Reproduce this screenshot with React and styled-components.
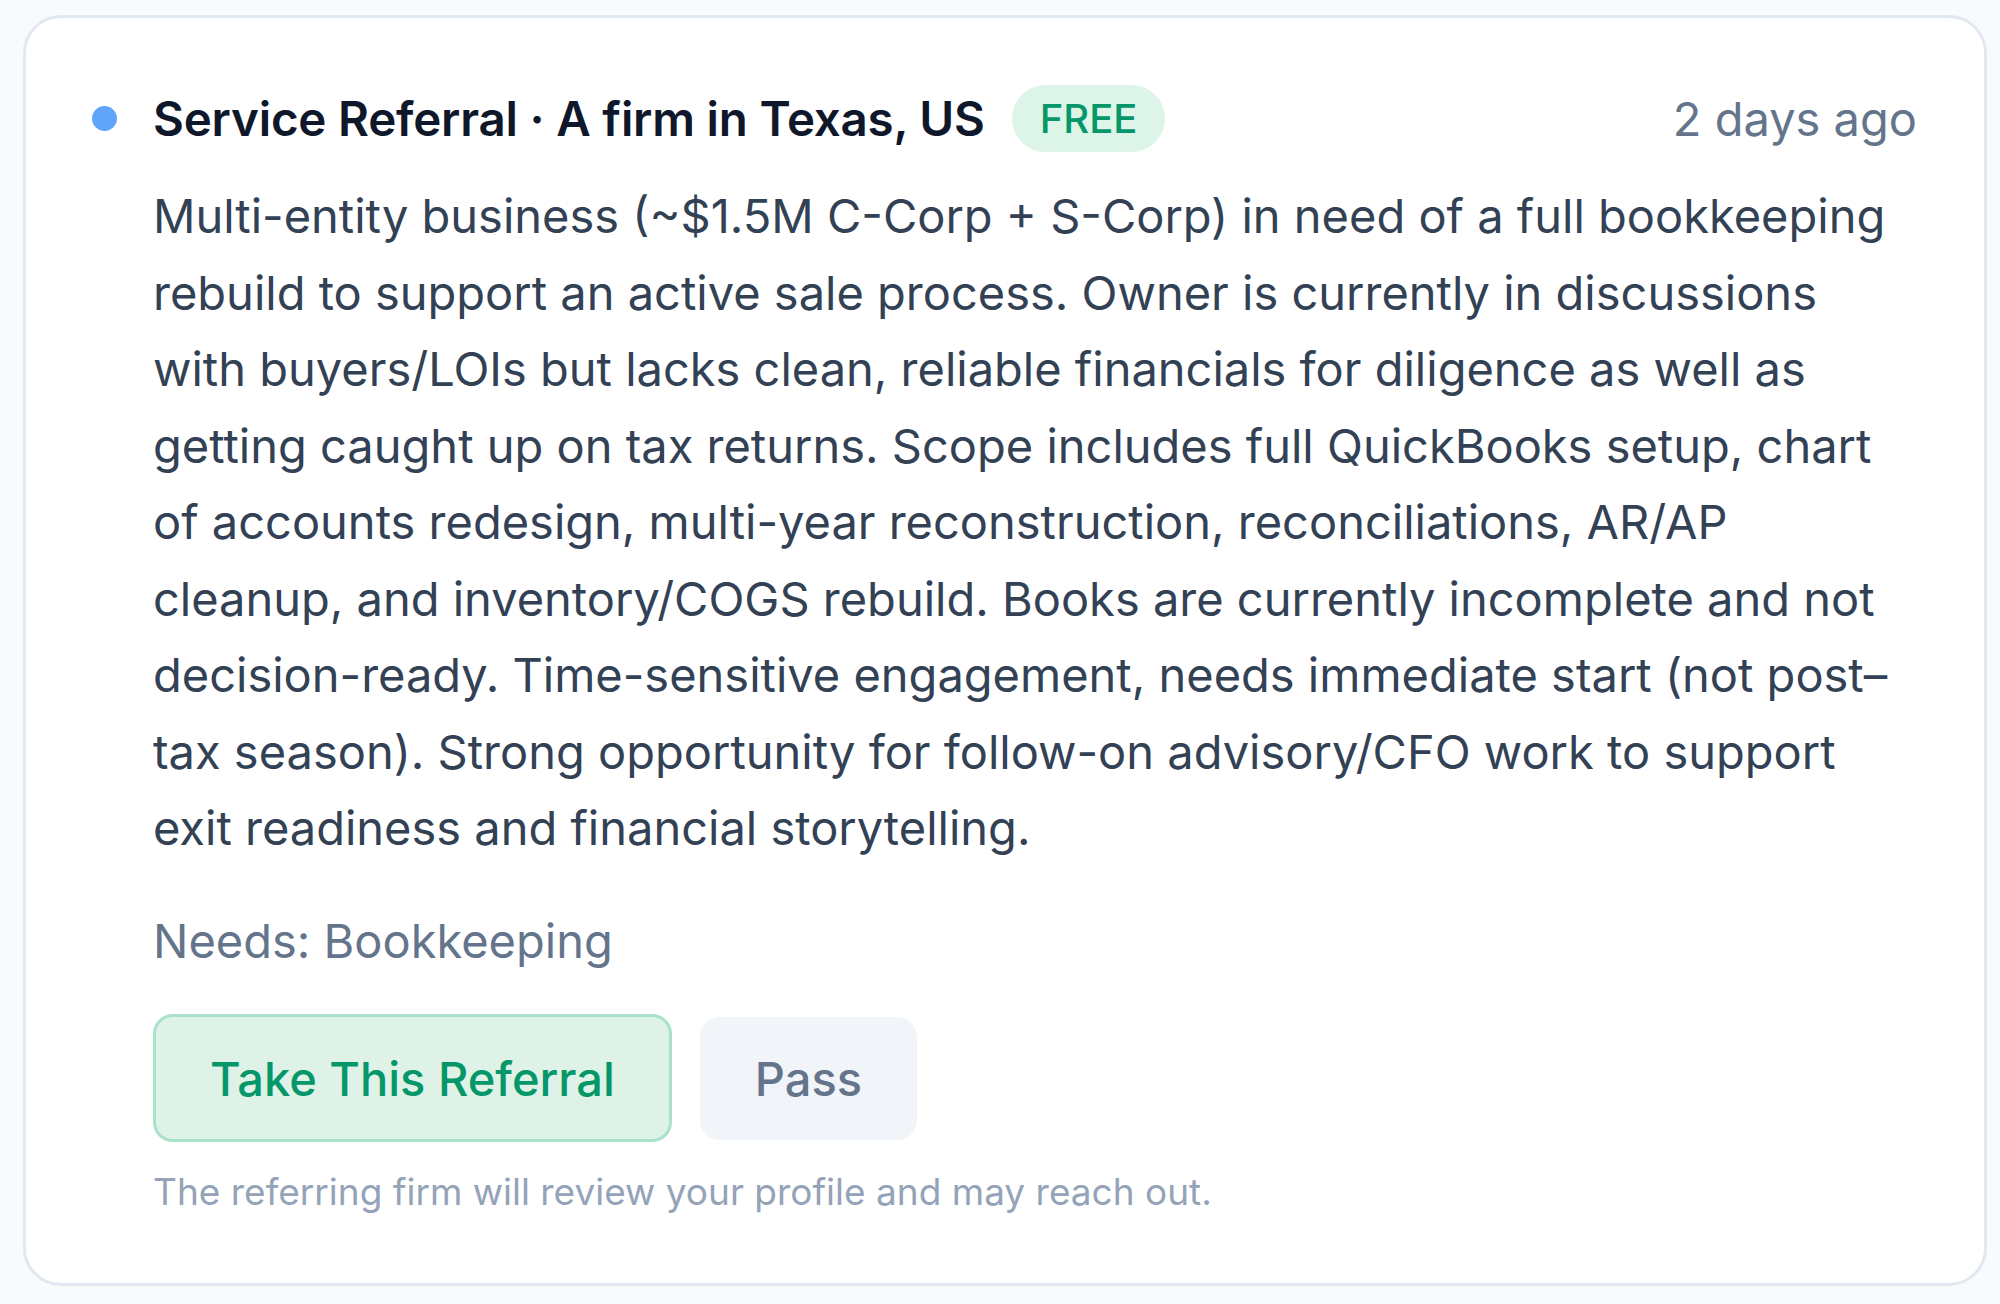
import React from 'react'
import styled, { createGlobalStyle } from 'styled-components'

const referral = {
  title: 'Service Referral · A firm in Texas, US',
  tag: 'FREE',
  age: '2 days ago',
  description:
    'Multi-entity business (~$1.5M C-Corp + S-Corp) in need of a full bookkeeping rebuild to support an active sale process. Owner is currently in discussions with buyers/LOIs but lacks clean, reliable financials for diligence as well as getting caught up on tax returns. Scope includes full QuickBooks setup, chart of accounts redesign, multi-year reconstruction, reconciliations, AR/AP cleanup, and inventory/COGS rebuild. Books are currently incomplete and not decision-ready. Time-sensitive engagement, needs immediate start (not post–tax season). Strong opportunity for follow-on advisory/CFO work to support exit readiness and financial storytelling.',
  needs: 'Bookkeeping',
  note: 'The referring firm will review your profile and may reach out.',
}

const App = () => (
  <Page>
    <GlobalStyle />
    <Card>
      <Header>
        <Dot />
        <Title>{referral.title}</Title>
        <Badge>{referral.tag}</Badge>
        <Age>{referral.age}</Age>
      </Header>

      <Content>
        <Description>{referral.description}</Description>
        <Needs>Needs: {referral.needs}</Needs>

        <Actions>
          <ActionButton primary>Take This Referral</ActionButton>
          <ActionButton>Pass</ActionButton>
        </Actions>

        <Note>{referral.note}</Note>
      </Content>
    </Card>
  </Page>
)

export default App

const GlobalStyle = createGlobalStyle`
  * {
    box-sizing: border-box;
  }

  body {
    margin: 0;
    background: #f8fafc;
    font-family: Inter, "Noto Sans", sans-serif;
  }
`

const Page = styled.main`
  min-height: 1304px;
  padding: 15px 13px 0 23px;
  background: #f8fafc;
`

const Card = styled.section`
  background: #ffffff;
  border: 3px solid #e2e8f0;
  border-radius: 38px;
  padding: 67px 67px 66px 66px;
`

const Header = styled.div`
  display: flex;
  align-items: center;
  height: 67px;
`

const Dot = styled.span`
  width: 25px;
  height: 25px;
  border-radius: 50%;
  background: #60a5fa;
  flex-shrink: 0;
  margin-right: 36px;
`

const Title = styled.h2`
  margin: 0;
  font-size: 47.5px;
  font-weight: 600;
  letter-spacing: -0.2px;
  color: #0f172a;
`

const Badge = styled.span`
  margin-left: 27px;
  height: 67px;
  padding: 0 28px;
  display: inline-flex;
  align-items: center;
  border-radius: 34px;
  background: #dcf5e8;
  color: #059669;
  font-size: 40px;
  font-weight: 500;
`

const Age = styled.span`
  margin-left: auto;
  font-size: 47px;
  color: #64748b;
`

const Content = styled.div`
  display: flex;
  flex-direction: column;
  align-items: flex-start;
  margin-left: 61px;
`

const Description = styled.p`
  margin: 26px 0 0;
  font-size: 47px;
  line-height: 76.5px;
  color: #334155;
`

const Needs = styled.p`
  margin: 36px 0 0;
  font-size: 47px;
  line-height: 76.5px;
  color: #64748b;
`

const Actions = styled.div`
  display: flex;
  align-items: center;
  gap: 28px;
  margin-top: 35px;
`

const ActionButton = styled.button`
  height: ${(p) => (p.primary ? '128px' : '123px')};
  padding: 0 ${(p) => (p.primary ? '54px' : '55px')};
  border-radius: 20px;
  border: ${(p) => (p.primary ? '3px solid #a8e2c8' : 'none')};
  background: ${(p) => (p.primary ? '#dff2e8' : '#f1f5f9')};
  color: ${(p) => (p.primary ? '#059669' : '#64748b')};
  font-family: inherit;
  font-size: 47px;
  font-weight: 500;
  cursor: pointer;
`

const Note = styled.p`
  margin: 25px 0 0;
  font-size: 37px;
  line-height: 50px;
  color: #94a3b8;
`
